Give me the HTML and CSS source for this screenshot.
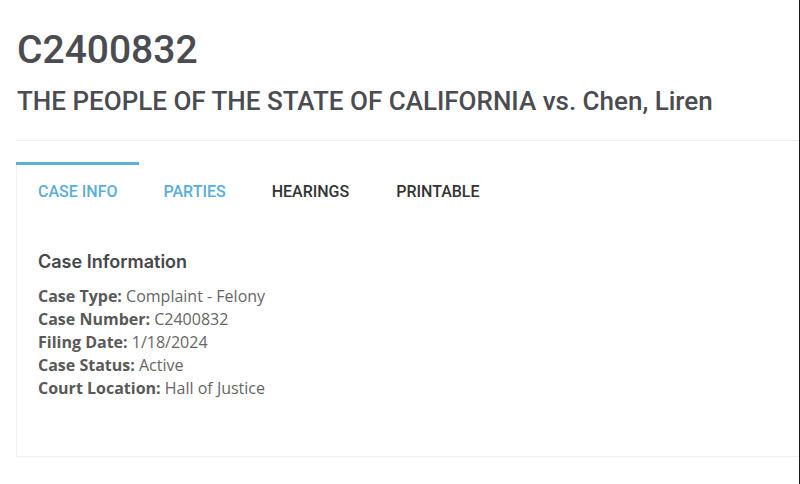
FILE: index.html
```html
<!DOCTYPE html>
<html lang="en">
<head>
<meta charset="utf-8">
<title>C2400832</title>
<link rel="stylesheet" href="styles.css">
</head>
<body>
<div class="page">
  <header class="case-header">
    <h1 class="case-id">C2400832</h1>
    <h2 class="case-title">THE PEOPLE OF THE STATE OF CALIFORNIA vs. Chen, Liren</h2>
  </header>
  <section class="card">
    <nav class="tabs">
      <a class="tab active">CASE INFO</a>
      <a class="tab link">PARTIES</a>
      <a class="tab">HEARINGS</a>
      <a class="tab">PRINTABLE</a>
    </nav>
    <div class="card-body">
      <h3 class="section-title">Case Information</h3>
      <ul class="info">
        <li><span class="label">Case Type:</span> Complaint - Felony</li>
        <li><span class="label">Case Number:</span> C2400832</li>
        <li><span class="label">Filing Date:</span> 1/18/2024</li>
        <li><span class="label">Case Status:</span> Active</li>
        <li><span class="label">Court Location:</span> Hall of Justice</li>
      </ul>
    </div>
  </section>
</div>
</body>
</html>
```
FILE: styles.css
```css
html, body {
  margin: 0;
  padding: 0;
  background: #fff;
}
.page {
  box-sizing: border-box;
  width: 800px;
  min-height: 484px;
  padding-left: 16px;
  border-right: 1px solid #1a1a1a;
  overflow: hidden;
}
.case-header {
  padding-top: 26px;
  padding-bottom: 24px;
  border-bottom: 1px solid #eeeeee;
}
.case-id {
  margin: 0;
  font-family: Roboto, "Liberation Sans", sans-serif;
  font-weight: 500;
  font-size: 39px;
  line-height: 48px;
  color: #4a4c51;
  padding-left: 1px;
}
.case-title {
  margin: 12px 0 0;
  font-family: Roboto, "Liberation Sans", sans-serif;
  font-weight: 500;
  font-size: 26px;
  line-height: 30px;
  color: #4a4c51;
  padding-left: 1px;
}
.card {
  margin-top: 21px;
  border-left: 1px solid #f0f0f0;
  border-bottom: 1px solid #f0f0f0;
  background: #fff;
}
.tabs {
  display: flex;
  margin-left: -1px;
}
.tab {
  display: block;
  padding: 17px 22px 15px;
  border-top: 3px solid transparent;
  font-family: Roboto, "Liberation Sans", sans-serif;
  font-weight: 500;
  font-size: 16px;
  line-height: 20px;
  color: #333;
  text-decoration: none;
}
.tab + .tab {
  padding-left: 24px;
}
.tab:last-child {
  padding-left: 25px;
}
.tab.active {
  border-top-color: #5cb1dc;
  color: #5aaed9;
}
.tab.link {
  color: #5aaed9;
}
.card-body {
  padding: 33px 21px 56px;
}
.section-title {
  margin: 0;
  font-family: Inter, "Liberation Sans", sans-serif;
  font-weight: 600;
  font-size: 18px;
  line-height: 24px;
  color: #45474b;
}
.info {
  list-style: none;
  margin: 11px 0 0;
  padding: 0;
  font-family: "Open Sans", "Liberation Sans", sans-serif;
  font-size: 16px;
  line-height: 23px;
  color: #666;
}
.label {
  font-weight: 700;
  color: #595959;
}
```
